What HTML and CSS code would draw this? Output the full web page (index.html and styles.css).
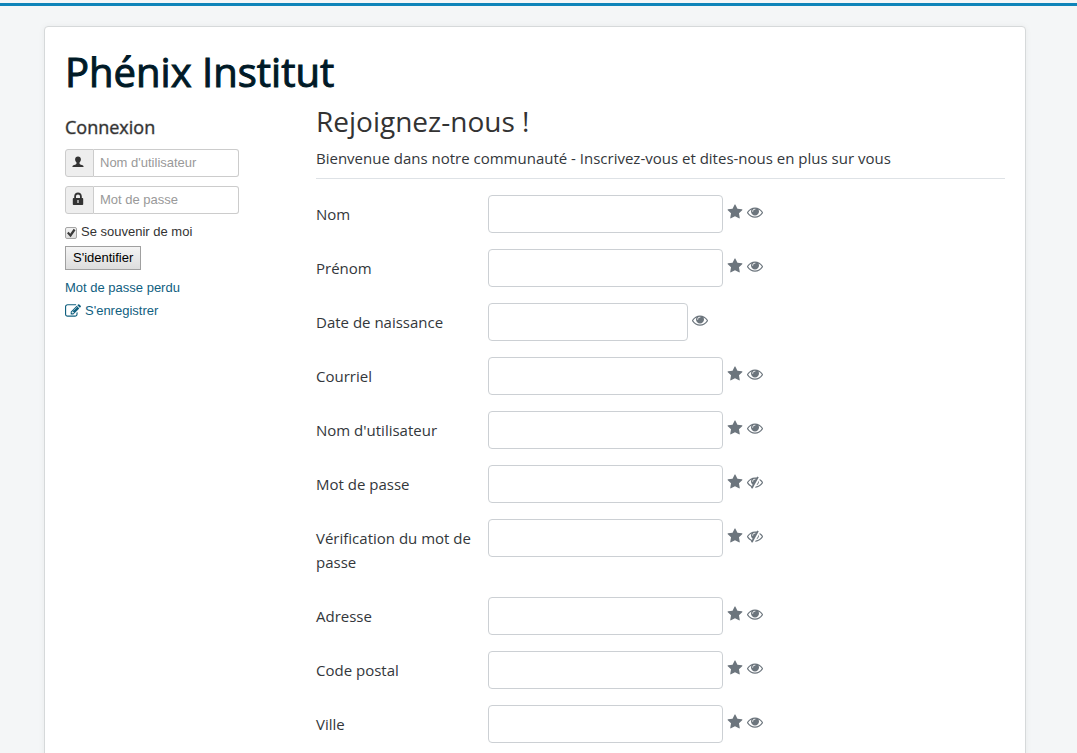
FILE: index.html
```html
<!DOCTYPE html>
<html lang="fr">
<head>
<meta charset="utf-8">
<title>Phénix Institut</title>
<link rel="stylesheet" href="styles.css">
</head>
<body>
<svg class="sprite" aria-hidden="true">
  <symbol id="star" viewBox="0 0 1792 1792"><path d="M1728 647q0 22-26 48l-363 354 86 500q1 7 1 20 0 21-10.5 35.5t-30.5 14.5q-19 0-40-12l-449-236-449 236q-22 12-40 12-21 0-31.5-14.5t-10.5-35.5q0-6 2-20l86-500-364-354q-25-27-25-48 0-37 56-46l502-73 225-455q19-41 49-41t49 41l225 455 502 73q56 9 56 46z"/></symbol>
  <symbol id="eye" viewBox="0 0 1792 1792"><path d="M1664 960q-152-236-381-353 61 104 61 225 0 185-131.5 316.5t-316.5 131.5-316.5-131.5-131.5-316.5q0-121 61-225-229 117-381 353 133 205 333.5 326.5t434.5 121.5 434.5-121.5 333.5-326.5zm-720-384q0-20-14-34t-34-14q-125 0-214.5 89.5t-89.5 214.5q0 20 14 34t34 14 34-14 14-34q0-86 61-147t147-61q20 0 34-14t14-34zm848 384q0 34-20 69-140 230-376.5 368.5t-499.5 138.5-499.5-139-376.5-368q-20-35-20-69t20-69q140-229 376.5-368t499.5-139 499.5 139 376.5 368q20 35 20 69z"/></symbol>
  <symbol id="eye-slash" viewBox="0 0 1792 1792"><path d="M555 1335l78-141q-87-63-136-159t-49-203q0-121 61-225-229 117-381 353 167 258 427 375zm389-759q0-20-14-34t-34-14q-125 0-214.5 89.5t-89.5 214.5q0 20 14 34t34 14 34-14 14-34q0-86 61-147t147-61q20 0 34-14t14-34zm363-191q0 7-1 9-106 189-316 567t-315 566l-49 89q-10 16-28 16-12 0-134-70-16-10-16-28 0-12 44-87-143-65-263.5-173t-208.5-245q-20-31-20-69t20-69q153-235 380-371t496-136q89 0 180 17l54-97q10-16 28-16 5 0 18 6t31 15.5 33 18.5 31.5 18.5 19.5 11.5q16 10 16 27zm37 447q0 139-79 253.5t-209 164.5l280-502q8 45 8 84zm448 128q0 35-20 69-39 64-109 145-150 172-347.5 267t-419.5 95l74-132q212-18 392.5-137t301.5-307q-115-179-282-294l63-112q95 64 182.5 153t144.5 184q20 34 20 69z"/></symbol>
  <symbol id="edit" viewBox="0 0 1792 1792"><path d="M888 1184l116-116-152-152-116 116v56h96v96h56zm440-720q-16-16-33 1l-350 350q-17 17-1 33t33-1l350-350q17-17 1-33zm80 594v190q0 119-84.5 203.5t-203.5 84.5h-832q-119 0-203.5-84.5t-84.5-203.5v-832q0-119 84.5-203.5t203.5-84.5h832q63 0 117 25 15 7 18 23 3 17-9 29l-49 49q-14 14-32 8-23-6-45-6h-832q-66 0-113 47t-47 113v832q0 66 47 113t113 47h832q66 0 113-47t47-113v-126q0-13 9-22l64-64q15-15 35-7t20 29zm-96-738l288 288-672 672h-288v-288zm444 132l-92 92-288-288 92-92q28-28 68-28t68 28l152 152q28 28 28 68t-28 68z"/></symbol>
  <symbol id="user" viewBox="0 0 12 12"><path d="M6 .5c1.8 0 2.9 1.1 2.9 2.8 0 1.400-.5 2.500-1.400 3.200v1.100c0 .4.3.6.8.8l2.200.8c.8.3 1.100.8 1.100 1.800H.4c0-1 .3-1.500 1.100-1.800l2.200-.8c.5-.2.8-.4.8-.8V6.500C3.600 5.800 3.100 4.700 3.100 3.300 3.100 1.600 4.200.5 6 .5z"/></symbol>
  <symbol id="lock" viewBox="0 0 12 14"><path fill-rule="evenodd" d="M2.200 6V4.600C2.200 2.200 3.800.6 6 .6s3.800 1.600 3.800 4V6h.6c.5 0 .8.3.8.8v5.400c0 .5-.3.8-.8.8H1.600c-.5 0-.8-.3-.8-.8V6.800c0-.5.3-.8.8-.8zM4 6h4V4.600c0-1.300-.8-2.200-2-2.200s-2 .9-2 2.200zM5.400 8v3h1.200V8z"/></symbol>
</svg>
<div class="card">
  <header><h1 class="site-title">Phénix Institut</h1></header>
  <div class="columns">
    <aside class="sidebar">
      <h2 class="side-title">Connexion</h2>
      <form class="login">
        <div class="addon-field">
          <label class="addon" for="login-user" aria-label="Nom d'utilisateur"><svg class="addon-user"><use href="#user"/></svg></label>
          <input class="addon-input" id="login-user" type="text" placeholder="Nom d'utilisateur">
        </div>
        <div class="addon-field">
          <label class="addon" for="login-pass" aria-label="Mot de passe"><svg class="addon-lock"><use href="#lock"/></svg></label>
          <input class="addon-input" id="login-pass" type="password" placeholder="Mot de passe">
        </div>
        <div class="remember">
          <input class="tick" id="remember" type="checkbox" checked>
          <label for="remember">Se souvenir de moi</label>
        </div>
        <button class="submit" type="button">S'identifier</button>
        <a class="link" href="#">Mot de passe perdu</a>
        <a class="link" href="#"><svg class="icon"><use href="#edit"/></svg>S'enregistrer</a>
      </form>
    </aside>
    <main class="main">
      <h2 class="page-title">Rejoignez-nous !</h2>
      <p class="intro">Bienvenue dans notre communauté - Inscrivez-vous et dites-nous en plus sur vous</p>
      <form class="fields">
        <div class="row"><label class="label" for="f1">Nom</label><input class="field" id="f1" type="text"><span class="marks"><svg class="icon"><use href="#star"/></svg><svg class="icon"><use href="#eye"/></svg></span></div>
        <div class="row"><label class="label" for="f2">Prénom</label><input class="field" id="f2" type="text"><span class="marks"><svg class="icon"><use href="#star"/></svg><svg class="icon"><use href="#eye"/></svg></span></div>
        <div class="row"><label class="label" for="f3">Date de naissance</label><input class="field field-date" id="f3" type="text"><span class="marks"><svg class="icon"><use href="#eye"/></svg></span></div>
        <div class="row"><label class="label" for="f4">Courriel</label><input class="field" id="f4" type="email"><span class="marks"><svg class="icon"><use href="#star"/></svg><svg class="icon"><use href="#eye"/></svg></span></div>
        <div class="row"><label class="label" for="f5">Nom d'utilisateur</label><input class="field" id="f5" type="text"><span class="marks"><svg class="icon"><use href="#star"/></svg><svg class="icon"><use href="#eye"/></svg></span></div>
        <div class="row"><label class="label" for="f6">Mot de passe</label><input class="field" id="f6" type="password"><span class="marks"><svg class="icon"><use href="#star"/></svg><svg class="icon"><use href="#eye-slash"/></svg></span></div>
        <div class="row"><label class="label" for="f7">Vérification du mot de passe</label><input class="field" id="f7" type="password"><span class="marks"><svg class="icon"><use href="#star"/></svg><svg class="icon"><use href="#eye-slash"/></svg></span></div>
        <div class="row"><label class="label" for="f8">Adresse</label><input class="field" id="f8" type="text"><span class="marks"><svg class="icon"><use href="#star"/></svg><svg class="icon"><use href="#eye"/></svg></span></div>
        <div class="row"><label class="label" for="f9">Code postal</label><input class="field" id="f9" type="text"><span class="marks"><svg class="icon"><use href="#star"/></svg><svg class="icon"><use href="#eye"/></svg></span></div>
        <div class="row"><label class="label" for="f10">Ville</label><input class="field" id="f10" type="text"><span class="marks"><svg class="icon"><use href="#star"/></svg><svg class="icon"><use href="#eye"/></svg></span></div>
      </form>
    </main>
  </div>
</div>
</body>
</html>
```
FILE: styles.css
```css
* { box-sizing: border-box; }
html { background: #f4f6f7; scrollbar-width: none; }
body {
  margin: 0;
  padding: 20px 51px 20px 44px;
  border-top: 3px solid #0f84b9;
  margin-top: 3px;
  font: 13px/18px "Liberation Sans", Arial, sans-serif;
  color: #333;
}
.sprite { display: none; }
.card {
  background: #fff;
  border: 1px solid #d6d9da;
  border-radius: 4px;
  box-shadow: 0 0 6px rgba(0, 0, 0, .05);
  padding: 20px;
}
.site-title {
  margin: 0;
  font: 400 40px/50px "Open Sans", sans-serif;
  -webkit-text-stroke: 1px currentColor;
  color: #001a27;
}
.columns { display: flex; gap: 77px; }
.sidebar { flex: 0 0 174px; min-width: 0; padding-top: 20px; }
.side-title {
  margin: 0 0 12px;
  font: 400 18px/20px "Open Sans", sans-serif;
  -webkit-text-stroke: 1px rgba(51, 51, 51, .4);
  color: #333;
}
.login { display: flex; flex-direction: column; align-items: flex-start; }
.addon-field { display: flex; width: 100%; height: 28px; margin-bottom: 9px; }
.addon {
  flex: 0 0 29px;
  display: flex;
  align-items: center;
  justify-content: center;
  background: #eee;
  border: 1px solid #ccc;
  border-radius: 3px 0 0 3px;
  padding: 0 4px 3px 0;
}
.addon-user { width: 12px; height: 12px; fill: #333; }
.addon-lock { width: 12px; height: 14px; fill: #333; }
.addon-input {
  flex: 1;
  width: 100%;
  min-width: 0;
  border: 1px solid #ccc;
  border-left: 0;
  border-radius: 0 3px 3px 0;
  padding: 0 6px;
  font: inherit;
  background: #fff;
}
.addon-input::placeholder { color: #999; opacity: 1; }
.remember { display: flex; align-items: center; gap: 4px; margin-bottom: 5px; }
.tick {
  appearance: none;
  width: 12px;
  height: 12px;
  margin: 2px 0 0;
  border: 1px solid #a5a5a5;
  border-radius: 2px;
  background: linear-gradient(#f2f2f2, #ddd);
}
.tick:checked::before {
  content: "";
  display: block;
  width: 10px;
  height: 10px;
  background: #3a3a3a;
  clip-path: polygon(10% 52%, 27% 38%, 42% 57%, 77% 8%, 95% 22%, 46% 92%);
}
.submit {
  height: 24px;
  margin-bottom: 9px;
  padding: 0 7px;
  border: 1px solid #a0a0a0;
  border-radius: 0;
  background: linear-gradient(#f4f4f4, #ddd);
  font: inherit;
  color: #000;
}
.link {
  display: flex;
  align-items: center;
  gap: 4px;
  margin-bottom: 5px;
  color: #10607f;
  text-decoration: none;
}
.icon { width: 16px; height: 16px; fill: currentColor; }
.main {
  flex: 1;
  min-width: 0;
  padding-top: 7px;
  font: 15px/24px "Open Sans", sans-serif;
  color: #33373b;
}
.page-title { margin: 0; font: 400 28px/34px "Open Sans", sans-serif; color: #333; }
.intro { margin: 8px 0 16px; padding-bottom: 8px; border-bottom: 1px solid #dee2e6; }
.fields { display: flex; flex-direction: column; gap: 16px; }
.row { display: flex; align-items: flex-start; }
.label { flex: 0 0 172px; padding: 7px 12px 7px 0; }
.field {
  flex: 0 1 235px;
  min-width: 0;
  height: 38px;
  padding: 6px 12px;
  border: 1px solid #ccd0d4;
  border-radius: 4px;
  background: #fff;
  font: inherit;
}
.field-date { flex-basis: 200px; }
.marks { display: flex; gap: 4px; padding: 9px 0 0 4px; color: #6c757d; }
```
